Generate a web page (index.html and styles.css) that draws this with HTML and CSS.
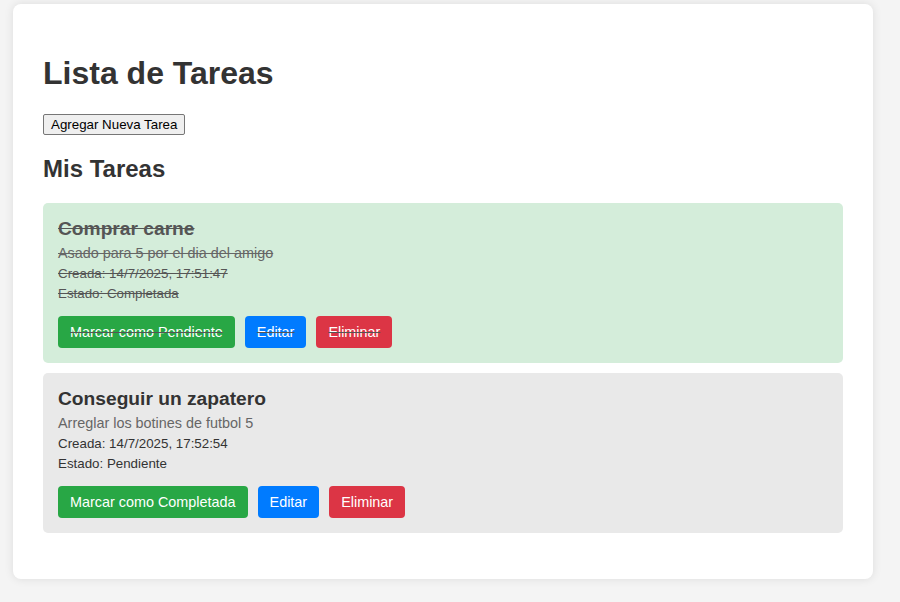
FILE: index.html
```html
<!DOCTYPE html>
<html lang="es">
<head>
<meta charset="utf-8">
<title>Lista de Tareas</title>
<link rel="stylesheet" href="styles.css">
</head>
<body>
<div class="container">
  <h1 class="title">Lista de Tareas</h1>
  <button class="add-btn">Agregar Nueva Tarea</button>
  <h2 class="subtitle">Mis Tareas</h2>
  <div class="task-list">
    <div class="task completed">
      <h3 class="task-title">Comprar carne</h3>
      <p class="task-desc">Asado para 5 por el dia del amigo</p>
      <p class="task-meta">Creada: 14/7/2025, 17:51:47</p>
      <p class="task-meta">Estado: Completada</p>
      <div class="actions">
        <button class="btn btn-green"><span class="btn-label">Marcar como Pendiente</span></button>
        <button class="btn btn-blue"><span class="btn-label">Editar</span></button>
        <button class="btn btn-red"><span class="btn-label">Eliminar</span></button>
      </div>
    </div>
    <div class="task">
      <h3 class="task-title">Conseguir un zapatero</h3>
      <p class="task-desc">Arreglar los botines de futbol 5</p>
      <p class="task-meta">Creada: 14/7/2025, 17:52:54</p>
      <p class="task-meta">Estado: Pendiente</p>
      <div class="actions">
        <button class="btn btn-green"><span class="btn-label">Marcar como Completada</span></button>
        <button class="btn btn-blue"><span class="btn-label">Editar</span></button>
        <button class="btn btn-red"><span class="btn-label">Eliminar</span></button>
      </div>
    </div>
  </div>
</div>
</body>
</html>
```

FILE: styles.css
```css
html, body {
  margin: 0;
  padding: 0;
}

body {
  background: #f4f4f4;
  font-family: "Liberation Sans", Arial, sans-serif;
  color: #333;
  padding: 4px 0 24px 13px;
}

.container {
  box-sizing: border-box;
  width: 860px;
  background: #fff;
  border-radius: 8px;
  box-shadow: 0 0 10px rgba(0, 0, 0, 0.1);
  padding: 30px 30px 36px 30px;
}

.title {
  font-size: 32px;
  margin: 21px 0 22px 0;
  color: #333;
}

.add-btn {
  font-family: "Liberation Sans", Arial, sans-serif;
  font-size: 13.33px;
  padding: 1px 7px;
  border: 1px solid #767676;
  border-radius: 2px;
  background: #efefef;
  color: #000;
  height: 21px;
}

.subtitle {
  font-size: 24px;
  margin: 20px 0 20px 0;
  color: #333;
}

.task {
  border-radius: 5px;
  background: #e9e9e9;
  padding: 15px;
  margin-bottom: 10px;
}

.task.completed {
  background: #d4edda;
}

.task-title {
  font-size: 19.2px;
  margin: 0 0 5px 0;
  line-height: 22px;
  color: #333;
}

.task-desc {
  font-size: 14.4px;
  color: #666;
  margin: 5px 0;
}

.task-meta {
  font-size: 13.33px;
  margin: 5px 0;
  color: #333;
}

.completed .task-title,
.completed .task-desc,
.completed .task-meta {
  text-decoration: line-through;
  color: #555;
}

.completed .task-desc {
  color: #666;
}

.actions {
  display: flex;
  gap: 10px;
  margin-top: 15px;
}

.btn {
  font-family: "Liberation Sans", Arial, sans-serif;
  font-size: 14.4px;
  border: none;
  border-radius: 4px;
  color: #fff;
  padding: 8px 12px;
  line-height: 16px;
  cursor: pointer;
}

.completed .btn-label {
  text-decoration: line-through;
  text-decoration-color: #555;
}

.btn-green { background: #28a745; }
.btn-blue { background: #007bff; }
.btn-red { background: #dc3545; }
```
